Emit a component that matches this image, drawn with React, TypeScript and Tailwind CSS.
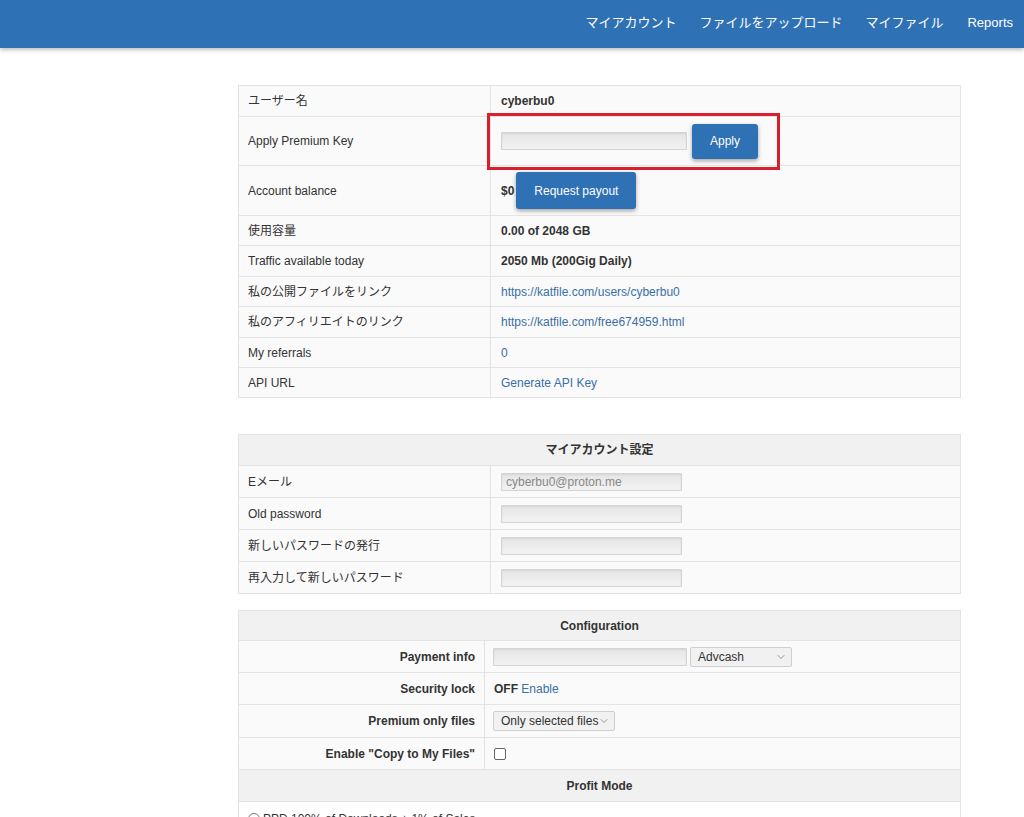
import { ChevronDown } from "lucide-react";

const font = { fontFamily: '"Liberation Sans", Arial, "Noto Sans CJK JP", sans-serif' };

/* -----------------------------
   Shared bits
----------------------------- */
const cellL = "border border-[#e3e3e3] pl-[9px] text-[12px] text-[#333]";
const cellR = "border border-[#e3e3e3] pl-[10px] text-[12px] text-[#333]";
const grayInput =
  "h-[18px] border border-[#d4d4d4] bg-gradient-to-b from-[#e6e6e6] to-[#f2f2f2] rounded-[1px] shadow-[inset_0_1px_2px_rgba(0,0,0,0.08)]";
const link = "text-[#3b6fa6]";
const rightLabel = "border border-[#e3e3e3] text-right pr-[9px] text-[12px] font-bold text-[#333]";

const Select = ({ label, w }: { label: string; w: string }) => (
  <div
    className={`${w} h-[20px] flex items-center justify-between whitespace-nowrap border border-[#cfcfcf] bg-[#f1f1f1] rounded-[2px] pl-[7px] pr-[4px] text-[12px] text-[#333]`}
  >
    <span>{label}</span>
    <ChevronDown size={12} strokeWidth={1.5} className="text-[#777] shrink-0" />
  </div>
);

export default function App() {
  const info = [
    { label: "Traffic available today", value: <b>2050 Mb (200Gig Daily)</b>, h: "h-[31px]" },
    { label: "私の公開ファイルをリンク", value: <span className={link}>https://katfile.com/users/cyberbu0</span>, h: "h-[30px]" },
    { label: "私のアフィリエイトのリンク", value: <span className={link}>https://katfile.com/free674959.html</span>, h: "h-[31px]" },
    { label: "My referrals", value: <span className={link}>0</span>, h: "h-[30px]" },
    { label: "API URL", value: <span className={link}>Generate API Key</span>, h: "h-[30px]" },
  ];

  return (
    <div className="min-h-[817px] bg-white overflow-hidden" style={font}>
      {/* -----------------------------
          Top nav
      ----------------------------- */}
      <div className="h-[48px] bg-[#2f71b5] shadow-[0_2px_4px_rgba(0,0,0,0.25)] flex items-center justify-end pr-[11px] pb-[3px] text-[13px] text-white">
        <span className="mr-[23px]">マイアカウント</span>
        <span className="mr-[23px]">ファイルをアップロード</span>
        <span className="mr-[24px]">マイファイル</span>
        <span>Reports</span>
      </div>

      <div className="ml-[238px] w-[723px] pt-[37px]">
        {/* -----------------------------
            Account info
        ----------------------------- */}
        <table className="w-full border-collapse bg-[#fafafa] table-fixed">
          <colgroup>
            <col className="w-[252px]" />
            <col />
          </colgroup>
          <tbody>
            <tr className="h-[31px]">
              <td className={cellL}>ユーザー名</td>
              <td className={cellR}>
                <b>cyberbu0</b>
              </td>
            </tr>
            <tr className="h-[49px]">
              <td className={cellL}>Apply Premium Key</td>
              <td className={`${cellR} relative`}>
                <div className="flex items-center">
                  <div className={`${grayInput} w-[186px]`} />
                  <button className="ml-[5px] w-[66px] h-[35px] bg-[#2f71b5] text-white text-[12px] rounded-[3px] shadow-[0_2px_4px_rgba(0,0,0,0.35)]">
                    Apply
                  </button>
                </div>
                <div className="absolute left-[-4px] top-[-4px] w-[293px] h-[57px] border-[3px] border-[#d91f2b]" />
              </td>
            </tr>
            <tr className="h-[50px]">
              <td className={cellL}>Account balance</td>
              <td className={cellR}>
                <div className="flex items-center">
                  <b>$0</b>
                  <button className="ml-[2px] w-[120px] h-[37px] bg-[#2f71b5] text-white text-[12px] rounded-[3px] shadow-[0_2px_4px_rgba(0,0,0,0.35)]">
                    Request payout
                  </button>
                </div>
              </td>
            </tr>
            <tr className="h-[30px]">
              <td className={cellL}>使用容量</td>
              <td className={cellR}>
                <b>0.00 of 2048 GB</b>
              </td>
            </tr>
            {info.map((r) => (
              <tr key={r.label} className={r.h}>
                <td className={cellL}>{r.label}</td>
                <td className={cellR}>{r.value}</td>
              </tr>
            ))}
          </tbody>
        </table>

        {/* -----------------------------
            Account settings
        ----------------------------- */}
        <table className="mt-[36px] w-full border-collapse bg-[#fafafa] table-fixed">
          <colgroup>
            <col className="w-[252px]" />
            <col />
          </colgroup>
          <tbody>
            <tr className="h-[31px] bg-[#f1f1f1]">
              <td colSpan={2} className="border border-[#e3e3e3] text-center text-[12px] font-bold text-[#333]">
                マイアカウント設定
              </td>
            </tr>
            <tr className="h-[32px]">
              <td className={cellL}>Eメール</td>
              <td className={cellR}>
                <div className={`${grayInput} w-[181px] text-[12px] text-[#888] pl-[4px] leading-[16px]`}>
                  cyberbu0@proton.me
                </div>
              </td>
            </tr>
            {["Old password", "新しいパスワードの発行", "再入力して新しいパスワード"].map((l) => (
              <tr key={l} className="h-[32px]">
                <td className={cellL}>{l}</td>
                <td className={cellR}>
                  <div className={`${grayInput} w-[181px]`} />
                </td>
              </tr>
            ))}
          </tbody>
        </table>

        {/* -----------------------------
            Configuration
        ----------------------------- */}
        <table className="mt-[16px] w-full border-collapse bg-[#fafafa] table-fixed">
          <colgroup>
            <col className="w-[246px]" />
            <col />
          </colgroup>
          <tbody>
            <tr className="h-[30px] bg-[#f1f1f1]">
              <td colSpan={2} className="border border-[#e3e3e3] text-center text-[12px] font-bold text-[#333]">
                Configuration
              </td>
            </tr>
            <tr className="h-[32px]">
              <td className={rightLabel}>Payment info</td>
              <td className="border border-[#e3e3e3] pl-[8px]">
                <div className="flex items-center">
                  <div className={`${grayInput} w-[194px]`} />
                  <div className="ml-[3px]">
                    <Select label="Advcash" w="w-[102px]" />
                  </div>
                </div>
              </td>
            </tr>
            <tr className="h-[32px]">
              <td className={rightLabel}>Security lock</td>
              <td className="border border-[#e3e3e3] pl-[9px] text-[12px] text-[#333]">
                <b>OFF</b> <span className={link}>Enable</span>
              </td>
            </tr>
            <tr className="h-[33px]">
              <td className={rightLabel}>Premium only files</td>
              <td className="border border-[#e3e3e3] pl-[8px]">
                <Select label="Only selected files" w="w-[122px]" />
              </td>
            </tr>
            <tr className="h-[32px]">
              <td className={rightLabel}>Enable "Copy to My Files"</td>
              <td className="border border-[#e3e3e3] pl-[9px]">
                <div className="w-[12px] h-[12px] border border-[#666] rounded-[2px] bg-white" />
              </td>
            </tr>
            <tr className="h-[32px] bg-[#f1f1f1]">
              <td colSpan={2} className="border border-[#e3e3e3] text-center text-[12px] font-bold text-[#333]">
                Profit Mode
              </td>
            </tr>
            <tr className="h-[32px] bg-white">
              <td colSpan={2} className="border border-[#e3e3e3] pl-[9px] pt-[8px] align-top text-[12px] text-[#333]">
                <div className="flex items-center">
                  <div className="w-[12px] h-[12px] rounded-full border border-[#777] bg-white mr-[3px]" />
                  PPD 100% of Downloads + 1% of Sales
                </div>
              </td>
            </tr>
          </tbody>
        </table>
      </div>
    </div>
  );
}
